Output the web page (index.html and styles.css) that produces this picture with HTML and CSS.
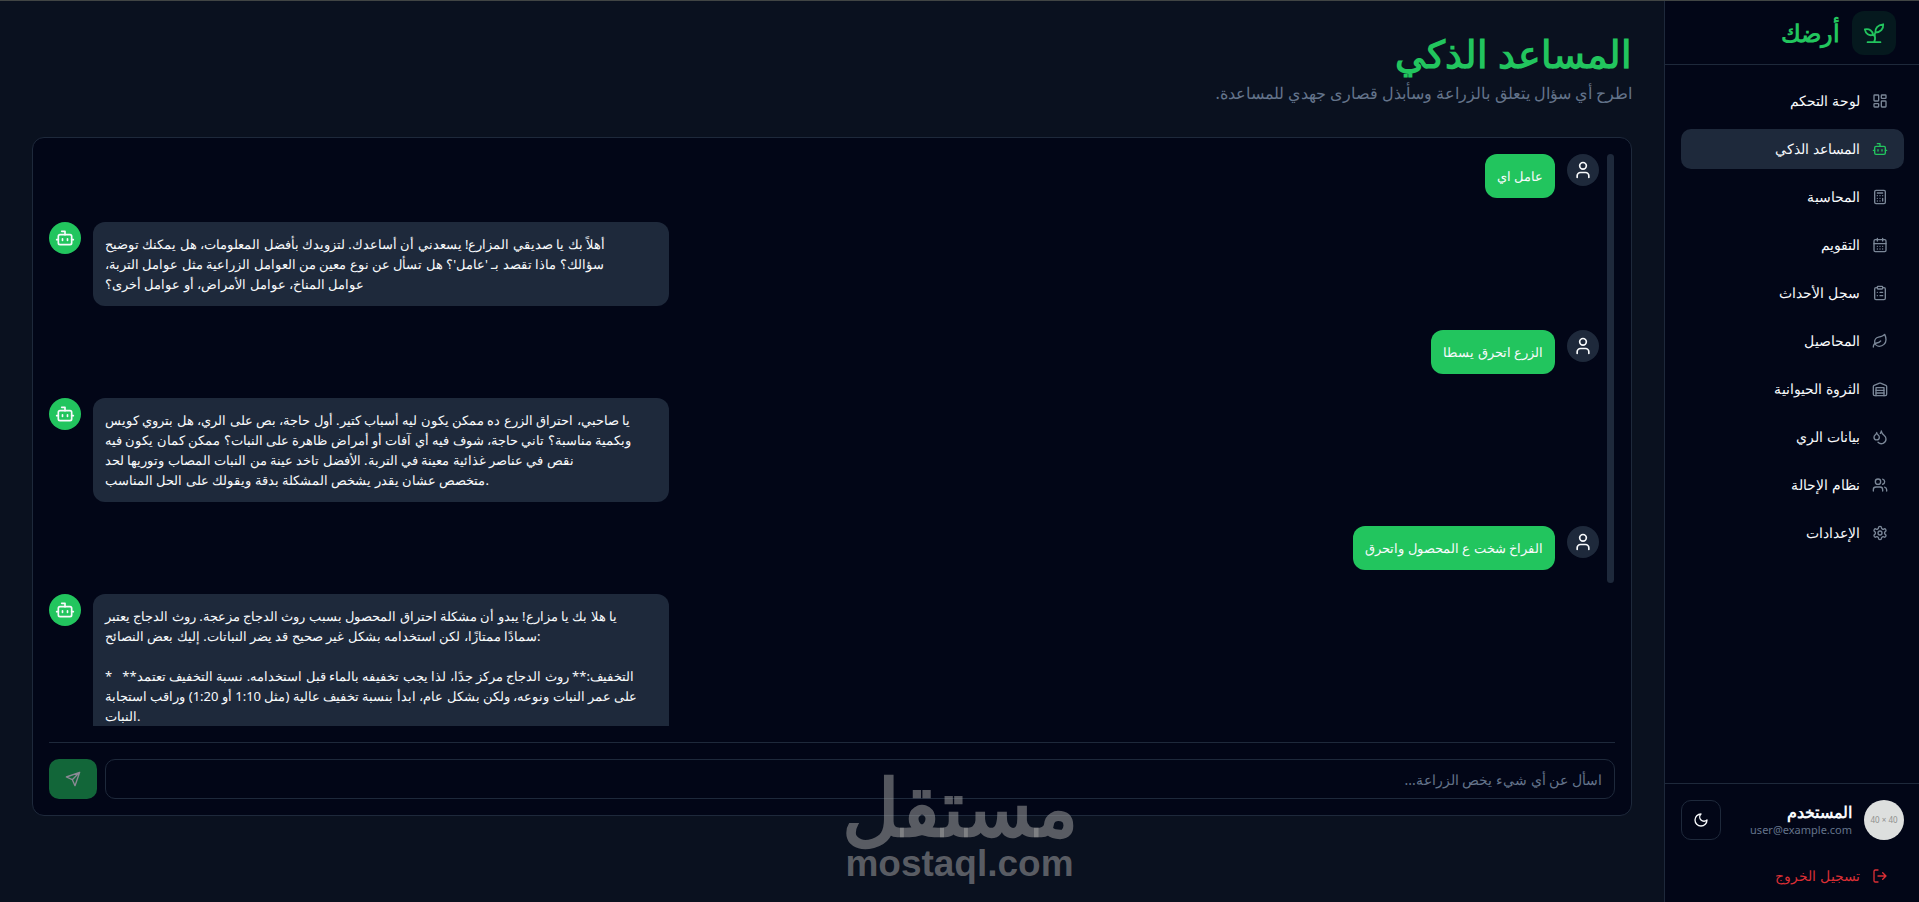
FILE: index.html
```html
<!DOCTYPE html>
<html lang="ar" dir="rtl">
<head>
<meta charset="utf-8">
<title>المساعد الذكي - أرضك</title>
<link rel="stylesheet" href="styles.css">
</head>
<body>
<svg class="sprite" aria-hidden="true">
  <symbol id="i-bot" viewBox="0 0 24 24"><path d="M12 8V4H8"/><rect width="16" height="12" x="4" y="8" rx="2"/><path d="M2 14h2M20 14h2M15 13v2M9 13v2"/></symbol>
  <symbol id="i-user" viewBox="0 0 24 24"><path d="M19 21v-2a4 4 0 0 0-4-4H9a4 4 0 0 0-4 4v2"/><circle cx="12" cy="7" r="4"/></symbol>
</svg>
<div class="app">
  <aside class="sidebar">
    <header class="brand">
      <span class="brand-mark"><svg class="icon" viewBox="0 0 24 24"><path d="M5 22h14M2 8C7 7 10.500 9.500 11 14C6.500 15.500 3 13 2 8ZM22 2.500C22.500 7.500 19 11.500 13.500 11.500C13 7 16 3 22 2.500ZM11 14C13.500 15.500 13.500 19 12 22M13.500 11.500C12.500 13 12.500 14 13 16"/></svg></span>
      <span class="brand-name">أرضك</span>
    </header>
    <nav class="nav">
      <a href="#"><svg class="icon" viewBox="0 0 24 24"><rect width="7" height="9" x="3" y="3" rx="1"/><rect width="7" height="5" x="14" y="3" rx="1"/><rect width="7" height="9" x="14" y="12" rx="1"/><rect width="7" height="5" x="3" y="16" rx="1"/></svg>لوحة التحكم</a>
      <a href="#" class="active" aria-current="page"><svg class="icon"><use href="#i-bot"/></svg>المساعد الذكي</a>
      <a href="#"><svg class="icon" viewBox="0 0 24 24"><rect width="16" height="20" x="4" y="2" rx="2"/><path d="M8 6h8M16 14v4M16 10h.01M12 10h.01M8 10h.01M12 14h.01M8 14h.01M12 18h.01M8 18h.01"/></svg>المحاسبة</a>
      <a href="#"><svg class="icon" viewBox="0 0 24 24"><path d="M8 2v4M16 2v4"/><rect width="18" height="18" x="3" y="4" rx="2"/><path d="M3 10h18M8 14h.01M12 14h.01M16 14h.01M8 18h.01M12 18h.01M16 18h.01"/></svg>التقويم</a>
      <a href="#"><svg class="icon" viewBox="0 0 24 24"><rect width="8" height="4" x="8" y="2" rx="1"/><path d="M16 4h2a2 2 0 0 1 2 2v14a2 2 0 0 1-2 2H6a2 2 0 0 1-2-2V6a2 2 0 0 1 2-2h2M12 11h4M12 16h4M8 11h.01M8 16h.01"/></svg>سجل الأحداث</a>
      <a href="#"><svg class="icon" viewBox="0 0 24 24"><path d="M11 20A7 7 0 0 1 9.800 6.100C15.500 5 17 4.480 19 2c1 2 2 4.180 2 8 0 5.500-4.780 10-10 10Z"/><path d="M2 21c0-3 1.850-5.360 5.080-6C9.500 14.520 12 13 13 12"/></svg>المحاصيل</a>
      <a href="#"><svg class="icon" viewBox="0 0 24 24"><path d="M22 8.350V20a2 2 0 0 1-2 2H4a2 2 0 0 1-2-2V8.350A2 2 0 0 1 3.260 6.500l8-3.200a2 2 0 0 1 1.480 0l8 3.200A2 2 0 0 1 22 8.350ZM6 18h12M6 14h12"/><path d="M6 22V10h12v12"/></svg>الثروة الحيوانية</a>
      <a href="#"><svg class="icon" viewBox="0 0 24 24"><path d="M7 16.300c2.200 0 4-1.830 4-4.050 0-1.160-.57-2.260-1.710-3.190S7.290 6.750 7 5.300c-.29 1.450-1.140 2.840-2.290 3.760S3 11.100 3 12.250c0 2.220 1.800 4.050 4 4.050z"/><path d="M12.560 6.600A10.970 10.970 0 0 0 14 3.020c.5 2.500 2 4.900 4 6.500s3 3.500 3 5.500a6.980 6.980 0 0 1-11.910 4.970"/></svg>بيانات الري</a>
      <a href="#"><svg class="icon" viewBox="0 0 24 24"><path d="M16 21v-2a4 4 0 0 0-4-4H6a4 4 0 0 0-4 4v2"/><circle cx="9" cy="7" r="4"/><path d="M22 21v-2a4 4 0 0 0-3-3.870M16 3.130a4 4 0 0 1 0 7.750"/></svg>نظام الإحالة</a>
      <a href="#"><svg class="icon" viewBox="0 0 24 24"><path d="M12.220 2h-.44a2 2 0 0 0-2 2v.18a2 2 0 0 1-1 1.730l-.43.25a2 2 0 0 1-2 0l-.15-.08a2 2 0 0 0-2.730.73l-.22.38a2 2 0 0 0 .73 2.730l.15.1a2 2 0 0 1 1 1.720v.51a2 2 0 0 1-1 1.740l-.15.09a2 2 0 0 0-.73 2.730l.22.38a2 2 0 0 0 2.730.73l.15-.08a2 2 0 0 1 2 0l.43.25a2 2 0 0 1 1 1.730V20a2 2 0 0 0 2 2h.44a2 2 0 0 0 2-2v-.18a2 2 0 0 1 1-1.730l.43-.25a2 2 0 0 1 2 0l.15.08a2 2 0 0 0 2.730-.73l.22-.39a2 2 0 0 0-.73-2.730l-.15-.08a2 2 0 0 1-1-1.740v-.5a2 2 0 0 1 1-1.740l.15-.09a2 2 0 0 0 .73-2.730l-.22-.38a2 2 0 0 0-2.730-.73l-.15.08a2 2 0 0 1-2 0l-.43-.25a2 2 0 0 1-1-1.730V4a2 2 0 0 0-2-2z"/><circle cx="12" cy="12" r="3"/></svg>الإعدادات</a>
    </nav>
    <footer class="account">
      <div class="profile">
        <span class="photo">40 × 40</span>
        <div class="who"><strong>المستخدم</strong><span dir="ltr">user@example.com</span></div>
        <button class="theme" type="button" aria-label="تبديل المظهر"><svg class="icon" viewBox="0 0 24 24"><path d="M12 3a6 6 0 0 0 9 9 9 9 0 1 1-9-9Z"/></svg></button>
      </div>
      <button class="logout" type="button"><svg class="icon" viewBox="0 0 24 24"><path d="M9 21H5a2 2 0 0 1-2-2V5a2 2 0 0 1 2-2h4M16 17l5-5-5-5M21 12H9"/></svg>تسجيل الخروج</button>
    </footer>
  </aside>
  <main class="main">
    <h1>المساعد الذكي</h1>
    <p class="lead">اطرح أي سؤال يتعلق بالزراعة وسأبذل قصارى جهدي للمساعدة.</p>
    <section class="card">
      <div class="chat">
        <div class="track"></div>
        <div class="messages">
          <div class="row user"><span class="avatar"><svg class="icon"><use href="#i-user"/></svg></span><p class="bubble">عامل اي</p></div>
          <div class="row bot"><span class="avatar"><svg class="icon"><use href="#i-bot"/></svg></span><p class="bubble">أهلاً بك يا صديقي المزارع! يسعدني أن أساعدك. لتزويدك بأفضل المعلومات، هل يمكنك توضيح<br>سؤالك؟ ماذا تقصد بـ 'عامل'؟ هل تسأل عن نوع معين من العوامل الزراعية مثل عوامل التربة،&rlm;<br>عوامل المناخ، عوامل الأمراض، أو عوامل أخرى؟&rlm;</p></div>
          <div class="row user"><span class="avatar"><svg class="icon"><use href="#i-user"/></svg></span><p class="bubble">الزرع اتحرق يسطا</p></div>
          <div class="row bot"><span class="avatar"><svg class="icon"><use href="#i-bot"/></svg></span><p class="bubble">يا صاحبي، احتراق الزرع ده ممكن يكون ليه أسباب كتير. أول حاجة، بص على الري، هل بتروي كويس<br>وبكمية مناسبة؟ تاني حاجة، شوف فيه أي آفات أو أمراض ظاهرة على النبات؟ ممكن كمان يكون فيه<br>نقص في عناصر غذائية معينة في التربة. الأفضل تاخد عينة من النبات المصاب وتوريها لحد<br>متخصص عشان يقدر يشخص المشكلة بدقة ويقولك على الحل المناسب.</p></div>
          <div class="row user"><span class="avatar"><svg class="icon"><use href="#i-user"/></svg></span><p class="bubble">الفراخ شخت ع المحصول واتحرق</p></div>
          <div class="row bot"><span class="avatar"><svg class="icon"><use href="#i-bot"/></svg></span><p class="bubble">يا هلا بك يا مزارع! يبدو أن مشكلة احتراق المحصول بسبب روث الدجاج مزعجة. روث الدجاج يعتبر<br>سمادًا ممتازًا، لكن استخدامه بشكل غير صحيح قد يضر النباتات. إليك بعض النصائح:<br><br>*&nbsp;&nbsp; **التخفيف:** روث الدجاج مركز جدًا، لذا يجب تخفيفه بالماء قبل استخدامه. نسبة التخفيف تعتمد<br>على عمر النبات ونوعه، ولكن بشكل عام، ابدأ بنسبة تخفيف عالية (مثل 1:10 أو 1:20) وراقب استجابة<br>النبات.<br><br></p></div>
        </div>
      </div>
      <form class="composer">
        <input type="text" aria-label="سؤالك" placeholder="اسأل عن أي شيء يخص الزراعة...">
        <button type="button" aria-label="إرسال" disabled><svg class="icon" viewBox="0 0 24 24"><path d="m22 2-7 20-4-9-9-4ZM22 2 11 13"/></svg></button>
      </form>
    </section>
  </main>
</div>
<div class="watermark" aria-hidden="true"><span class="wm-ar">مستقل</span><span class="wm-en" dir="ltr">mostaql.com</span></div>
</body>
</html>
```
FILE: styles.css
```css
* { box-sizing: border-box; margin: 0; padding: 0; }
body { background: #020617; color: #f8fafc; font: 14px/20px "Noto Sans", sans-serif; overflow: hidden; }
button, input { font: inherit; color: inherit; }
a { color: inherit; text-decoration: none; }
.sprite { display: none; }
.icon { flex: none; width: 16px; height: 16px; fill: none; stroke: currentColor; stroke-width: 2; stroke-linecap: round; stroke-linejoin: round; }
.app { display: flex; height: 100vh; border-top: 1px solid #414544; }

.sidebar { flex: none; width: 255px; display: flex; flex-direction: column; border-left: 1px solid #1e293b; }
.brand { display: flex; align-items: center; gap: 12px; height: 64px; padding: 0 23px; border-bottom: 1px solid #1e293b; }
.brand-mark { display: grid; place-items: center; width: 44px; height: 44px; border-radius: 12px; background: #05191e; color: #22c55e; }
.brand-mark .icon { width: 22px; height: 22px; }
.brand-name { color: #22c55e; font-size: 24px; line-height: 32px; font-weight: 700; }
.nav { flex: 1; display: flex; flex-direction: column; gap: 8px; padding: 16px 15px 16px 16px; }
.nav a { display: flex; align-items: center; gap: 12px; height: 40px; padding: 0 16px; border-radius: 10px; }
.nav .icon { color: #7b8798; }
.nav .active { background: #1e293b; }
.nav .active .icon { color: #22c55e; }
.account { padding: 16px 15px 6px 16px; border-top: 1px solid #1e293b; }
.profile { display: flex; align-items: center; gap: 12px; margin-bottom: 16px; }
.photo { display: grid; place-items: center; width: 40px; height: 40px; border-radius: 50%; background: #dddfde; color: #8f918e; font-size: 8px; }
.who { flex: 1; display: flex; flex-direction: column; align-items: flex-start; }
.who strong { font-size: 16px; line-height: 20px; }
.who span { color: #64748b; font-size: 11px; line-height: 16px; }
.theme { display: grid; place-items: center; width: 40px; height: 40px; background: none; border: 1px solid #1e293b; border-radius: 10px; }
.logout { display: flex; align-items: center; gap: 12px; width: 100%; height: 40px; padding: 0 16px; background: none; border: 0; color: #dc2f35; }

.main { flex: 1; min-width: 0; display: flex; flex-direction: column; padding: 32px 32px 86px; background: #0a111f; }
h1 { color: #22c55e; font-size: 38px; line-height: 40px; margin-bottom: 8px; }
.lead { color: #64748b; font-size: 16px; line-height: 24px; margin-bottom: 32px; }
.card { flex: 1; min-height: 0; display: flex; flex-direction: column; gap: 16px; padding: 16px; background: #020617; border: 1px solid #1e293b; border-radius: 12px; }
.chat { flex: 1; min-height: 0; display: flex; gap: 8px; padding-right: 1px; overflow: hidden; }
.track { flex: none; width: 7px; height: 75%; border-radius: 4px; background: #1e293b; }
.messages { flex: 1; display: flex; flex-direction: column; gap: 24px; }
.row { display: flex; align-items: flex-start; gap: 12px; }
.row.bot { direction: ltr; }
.avatar { flex: none; display: grid; place-items: center; width: 32px; height: 32px; border-radius: 50%; background: #1e293b; }
.avatar .icon { width: 20px; height: 20px; }
.bubble { max-width: 576px; padding: 12px; border-radius: 12px; background: #22c55e; direction: ltr; white-space: nowrap; font-size: 13px; }
.bot .avatar { background: #22c55e; }
.bot .bubble { flex: 1; background: #1e293b; }
.composer { display: flex; gap: 8px; padding-top: 16px; border-top: 1px solid #1e293b; }
.composer input { flex: 1; min-width: 0; height: 40px; padding: 0 12px; background: none; border: 1px solid #1e293b; border-radius: 10px; }
.composer input::placeholder { color: #64748b; opacity: 1; }
.composer button { display: grid; place-items: center; width: 48px; height: 40px; border: 0; border-radius: 10px; background: #126639; color: #8c8995; }

.watermark { position: absolute; left: 50%; bottom: 18px; display: flex; flex-direction: column; align-items: center; transform: translateX(-50%); color: #a0a0a088; font-weight: 700; pointer-events: none; }
.wm-ar { font-size: 79px; line-height: 76px; }
.wm-en { font: 700 37px/40px "Liberation Sans", sans-serif; }
```
